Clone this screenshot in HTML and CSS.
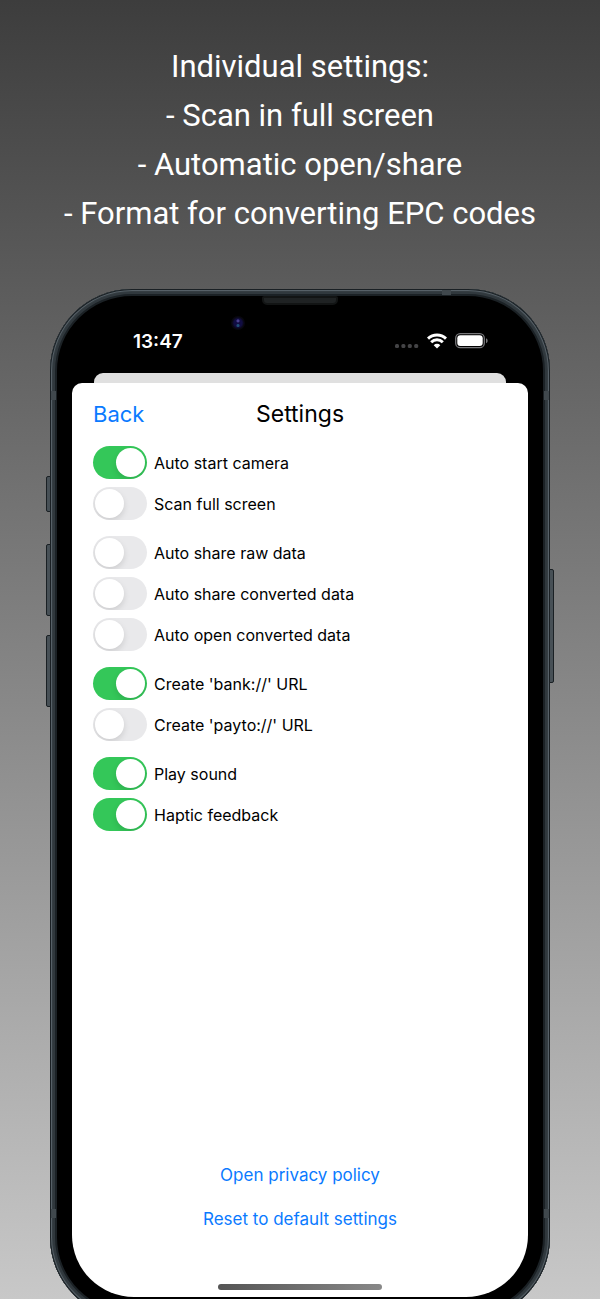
FILE: index.html
```
<!DOCTYPE html>
<html lang="en">
<head>
    <meta charset="UTF-8">
    <meta name="viewport" content="width=device-width, initial-scale=1.0">
    <title>Settings</title>
    <link rel="stylesheet" href="styles.css">
</head>
<body>
    <h1 class="headline">
        Individual settings:<br>
        - Scan in full screen<br>
        - Automatic open/share<br>
        - Format for converting EPC codes
    </h1>

    <div class="phone">
        <span class="side-key mute"></span>
        <span class="side-key volume-up"></span>
        <span class="side-key volume-down"></span>
        <span class="side-key power"></span>
        <span class="antenna antenna-top"></span>
        <span class="antenna antenna-left"></span>
        <span class="antenna antenna-right"></span>
        <span class="antenna antenna-low-left"></span>
        <span class="antenna antenna-low-right"></span>
        <span class="speaker"></span>
        <span class="camera"></span>

        <div class="status-bar">
            <span class="time">13:47</span>
            <div class="status-icons">
                <svg width="24" height="16" viewBox="0 0 24 16" fill="#444446">
                    <rect x="0" y="11" width="4" height="4" rx="1.5"/>
                    <rect x="6.4" y="11" width="4" height="4" rx="1.5"/>
                    <rect x="12.8" y="11" width="4" height="4" rx="1.5"/>
                    <rect x="19.2" y="11" width="4" height="4" rx="1.5"/>
                </svg>
                <svg width="20" height="16" viewBox="0 0 20 16" fill="none" stroke="#fff" stroke-width="3">
                    <path d="M1 5.6a12.9 12.9 0 0 1 18 0"/>
                    <path d="M4.2 9.2a8.3 8.3 0 0 1 11.6 0"/>
                    <path d="M10 15.5L6.7 12.2a4.7 4.7 0 0 1 6.6 0z" fill="#fff" stroke="none"/>
                </svg>
                <svg width="33" height="16" viewBox="0 0 33 16">
                    <rect x="0.7" y="0.7" width="28.6" height="14" rx="4.5" fill="none" stroke="#77777a" stroke-width="1.3"/>
                    <rect x="2.3" y="2.3" width="25.4" height="10.8" rx="3" fill="#fff"/>
                    <path d="M31 5.2c2.2.8 2.2 4.2 0 5z" fill="#77777a"/>
                </svg>
            </div>
        </div>

        <div class="sheet-behind"></div>
        <main class="sheet">
            <header class="sheet-header">
                <button type="button" class="back">Back</button>
                <h2>Settings</h2>
            </header>

            <form class="settings">
                <div class="group">
                    <label class="option"><input type="checkbox" class="switch" checked>Auto start camera</label>
                    <label class="option"><input type="checkbox" class="switch">Scan full screen</label>
                </div>
                <div class="group">
                    <label class="option"><input type="checkbox" class="switch">Auto share raw data</label>
                    <label class="option"><input type="checkbox" class="switch">Auto share converted data</label>
                    <label class="option"><input type="checkbox" class="switch">Auto open converted data</label>
                </div>
                <div class="group">
                    <label class="option"><input type="checkbox" class="switch" checked>Create 'bank://' URL</label>
                    <label class="option"><input type="checkbox" class="switch">Create 'payto://' URL</label>
                </div>
                <div class="group">
                    <label class="option"><input type="checkbox" class="switch" checked>Play sound</label>
                    <label class="option"><input type="checkbox" class="switch" checked>Haptic feedback</label>
                </div>
            </form>

            <footer class="sheet-footer">
                <a href="#privacy">Open privacy policy</a>
                <button type="button">Reset to default settings</button>
            </footer>
            <div class="home-bar"></div>
        </main>
    </div>
</body>
</html>
```
FILE: styles.css
```
* {
    box-sizing: border-box;
}

body {
    margin: 0;
    height: 100vh;
    min-height: 1100px;
    display: flex;
    flex-direction: column;
    overflow: hidden;
    background: linear-gradient(#3d3d3d, #c8c8c8);
    font-family: Inter, "Liberation Sans", sans-serif;
    color: #000;
}

.headline {
    margin: 0;
    padding: 42px 20px 51px;
    font-family: Roboto, sans-serif;
    font-size: 31px;
    line-height: 49px;
    font-weight: 400;
    text-align: center;
    color: #fff;
}

/* Phone, its lower edge runs off the page */
.phone {
    position: relative;
    flex: 1;
    display: flex;
    flex-direction: column;
    margin: 0 50px -20px;
    padding: 8px 22px 22px;
    border-radius: 82px;
    background: #000;
    box-shadow:
        inset 0 0 0 1px #1a2024,
        inset 0 0 0 2px #566067,
        inset 0 0 0 3px #353d42,
        inset 0 0 0 5px #30383d,
        inset 0 0 0 7px #1b2125;
}

.side-key {
    position: absolute;
    width: 5px;
    border: 1px solid #1a2024;
    background: #475056;
}

.mute,
.volume-up,
.volume-down {
    left: -4px;
    border-radius: 2px 0 0 2px;
}

.mute {
    top: 187px;
    height: 36px;
}

.volume-up {
    top: 255px;
    height: 72px;
}

.volume-down {
    top: 346px;
    height: 72px;
}

.power {
    right: -4px;
    top: 280px;
    height: 114px;
    border-radius: 0 2px 2px 0;
}

.antenna {
    position: absolute;
    width: 5px;
    height: 9px;
    background: #40484d;
}

.antenna-top {
    top: 1px;
    right: 99px;
    width: 9px;
    height: 5px;
}

.antenna-left,
.antenna-low-left {
    left: 1px;
}

.antenna-right,
.antenna-low-right {
    right: 1px;
}

.antenna-left,
.antenna-right {
    top: 102px;
}

.antenna-low-left,
.antenna-low-right {
    bottom: 101px;
}

.speaker {
    position: absolute;
    top: 7px;
    left: 50%;
    width: 76px;
    height: 9px;
    margin-left: -38px;
    border: 2px solid #121414;
    border-radius: 2px 2px 5px 5px;
    background: #1f2223;
}

.camera {
    position: absolute;
    top: 27px;
    left: 181px;
    width: 14px;
    height: 14px;
    border-radius: 50%;
    background:
        radial-gradient(circle at 50% 35%, #4b4090 0 1px, transparent 2px),
        radial-gradient(circle at 50% 68%, #205078 0 1px, transparent 2px),
        radial-gradient(circle, #110d42 0 4px, #08070f 6px);
}

.status-bar {
    display: flex;
    justify-content: space-between;
    align-items: center;
    height: 76px;
    padding: 12px 40px 0 61px;
    color: #fff;
}

.time {
    font-size: 19px;
    font-weight: 600;
}

.status-icons {
    display: flex;
    gap: 8px;
}

/* Card peeking out behind the settings sheet */
.sheet-behind {
    height: 10px;
    margin: 0 22px;
    border-radius: 9px 9px 0 0;
    background: #e0e0e0;
}

.sheet {
    flex: 1;
    display: flex;
    flex-direction: column;
    padding: 14px 21px 7px;
    border-radius: 10px 10px 62px 62px;
    background: #fff;
}

.sheet-header {
    display: grid;
    grid-template-columns: 1fr auto 1fr;
    align-items: center;
    height: 34px;
    margin-bottom: 15px;
}

.sheet-header h2 {
    margin: 0;
    font-size: 23px;
    font-weight: 400;
}

button {
    padding: 0;
    border: 0;
    background: none;
    font: inherit;
    color: #0a7aff;
    cursor: pointer;
}

.back {
    justify-self: start;
    font-size: 22px;
}

.settings {
    display: flex;
    flex-direction: column;
    gap: 16px;
}

.group {
    display: flex;
    flex-direction: column;
    gap: 8px;
}

.option {
    display: flex;
    align-items: center;
    align-self: flex-start;
    gap: 7px;
    font-size: 16px;
    cursor: pointer;
}

.switch {
    appearance: none;
    width: 54px;
    height: 33px;
    margin: 0;
    padding: 2px;
    border-radius: 17px;
    overflow: hidden;
    background: #e9e9eb;
    cursor: pointer;
}

.switch::before {
    content: "";
    display: block;
    width: 29px;
    height: 29px;
    border-radius: 50%;
    background: #fff;
    box-shadow: 0 3px 6px rgba(0, 0, 0, 0.12);
}

.switch:checked {
    background: #34c759;
}

.switch:checked::before {
    margin-left: auto;
}

.sheet-footer {
    display: flex;
    flex-direction: column;
    align-items: center;
    gap: 20px;
    margin-top: auto;
    font-size: 17px;
    line-height: 24px;
}

.sheet-footer a {
    color: #0a7aff;
    text-decoration: none;
}

.home-bar {
    width: 164px;
    height: 6px;
    margin: 53px auto 0;
    border-radius: 3px;
    background: linear-gradient(90deg, #555, #888);
}
```
